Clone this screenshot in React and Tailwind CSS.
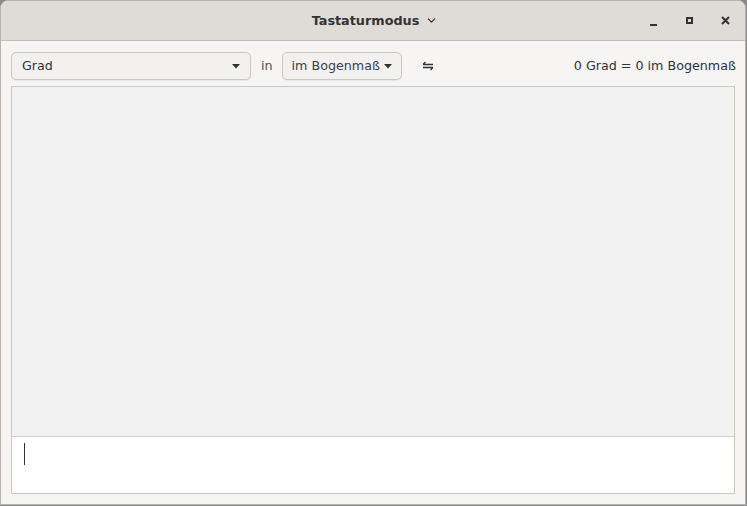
import { ChevronDown } from 'lucide-react';

function Caret() {
  return (
    <svg width="8" height="5" viewBox="0 0 8 5" className="shrink-0">
      <path d="M0 0 L8 0 L4 4.5 Z" fill="#2e3436" />
    </svg>
  );
}

function SwapIcon() {
  return (
    <svg width="12" height="10" viewBox="0 0 12 10">
      <path d="M1 3.5 H11 M1 3.5 L3.5 1 M11 6.5 H1 M11 6.5 L8.5 9" stroke="#2e3436" strokeWidth="1.3" fill="none" />
    </svg>
  );
}

export default function App() {
  return (
    <div className="w-[747px] h-[506px] flex bg-[#8a8a8a] overflow-hidden" style={{ fontFamily: '"DejaVu Sans", sans-serif' }}>
      <div className="w-[746px] h-[505px] flex flex-col bg-[#f6f5f4] border border-[#b6b3ae] rounded-t-[8px] overflow-hidden text-[12.7px] text-[#2e3436]">
        {/* Header bar */}
        <div className="h-[40px] shrink-0 flex items-center bg-[#dfdcd8] border-b border-[#c2beb9] relative">
          <div className="flex-1 flex items-center justify-center gap-[6px] pl-[4px]">
            <span className="font-bold text-[12.8px] text-[#2e3436]">Tastaturmodus</span>
            <ChevronDown size={13} strokeWidth={2.2} />
          </div>
          <div className="absolute right-[14px] top-0 h-full flex items-center gap-[24px]">
            <div className="w-[12px] h-[12px] flex items-end justify-center pb-[1px]">
              <div className="w-[7px] h-[2px] bg-[#2e3436]" />
            </div>
            <div className="w-[12px] h-[12px] flex items-center justify-center">
              <div className="w-[7px] h-[7px] border-2 border-[#2e3436]" />
            </div>
            <div className="w-[12px] h-[12px] flex items-center justify-center">
              <svg width="9" height="9" viewBox="0 0 9 9">
                <path d="M1 1 L8 8 M8 1 L1 8" stroke="#2e3436" strokeWidth="2" />
              </svg>
            </div>
          </div>
        </div>

        {/* Toolbar */}
        <div className="flex items-center h-[28px] mt-[11px] pl-[10px] pr-[9px] whitespace-nowrap">
          <div className="w-[240px] h-[28px] flex items-center justify-between px-[10px] bg-[#f2f1f0] border border-[#cdc7c2] rounded-[5px] shadow-[0_1px_0_rgba(0,0,0,0.05)]">
            <span>Grad</span>
            <Caret />
          </div>
          <span className="ml-[10px] mr-[9px] text-[#4a4f50]">in</span>
          <div className="w-[120px] h-[28px] shrink-0 flex items-center gap-[4px] px-[9px] bg-[#f2f1f0] border border-[#cdc7c2] rounded-[5px] shadow-[0_1px_0_rgba(0,0,0,0.05)]">
            <span className="text-[#3c4042]">im Bogenmaß</span>
            <Caret />
          </div>
          <div className="ml-[20px]">
            <SwapIcon />
          </div>
          <div className="flex-1 text-right">0 Grad = 0 im Bogenmaß</div>
        </div>

        {/* Content */}
        <div className="flex-1 flex flex-col mx-[10px] mt-[6px] mb-[10px] border border-[#cdc7c2]">
          <div className="flex-1 bg-[#f2f2f2] border-b border-[#d6d3cf]" />
          <div className="h-[56px] bg-white pl-[12px] pt-[6px]">
            <div className="w-[1px] h-[22px] bg-[#2e3436]" />
          </div>
        </div>
      </div>
    </div>
  );
}
